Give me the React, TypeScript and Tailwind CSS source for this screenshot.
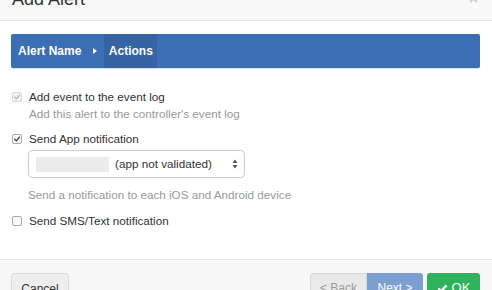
import React from 'react';

function Check({ checked, disabled }: { checked?: boolean; disabled?: boolean }) {
    return (
        <span
            className={`flex h-[10px] w-[10px] shrink-0 items-center justify-center rounded-[2px] border ${
                disabled ? 'border-[#d6d6d6] bg-[#f2f2f2]' : 'border-[#a9a9a9] bg-[#fbfbfb]'
            }`}
        >
            {checked && (
                <svg viewBox="0 0 10 10" className="h-[8px] w-[8px]">
                    <path
                        d="M2 5.2 L4.2 7.4 L8 2.6"
                        fill="none"
                        stroke={disabled ? '#b5b5b5' : '#333'}
                        strokeWidth="1.6"
                        strokeLinecap="round"
                        strokeLinejoin="round"
                    />
                </svg>
            )}
        </span>
    );
}

export default function App() {
    return (
        <div className="flex h-[290px] w-[492px] flex-col overflow-hidden bg-white font-['Liberation_Sans',Arial,sans-serif] text-[#333]">
            {/* header */}
            <div className="relative h-[21px] shrink-0 overflow-hidden border-b border-[#e5e5e5] bg-[#f9f9f9]">
                <div className="-mt-[11px] pl-[12px] text-[18px] leading-[20px] text-[#333]">Add Alert</div>
                <span className="absolute right-[14px] -top-[9px] text-[16px] font-bold leading-[16px] text-[#c8c8c8]">×</span>
            </div>

            {/* body */}
            <div className="flex flex-1 flex-col pl-[11px] pr-[12px] pt-[13px]">
                <div className="flex h-[34px] items-stretch rounded-[2px] bg-[#3a6eb5] text-[12px] font-bold text-white shadow-[0_1px_1px_rgba(0,0,0,0.15)]">
                    <div className="flex items-center pl-[7px] pr-[12px]">Alert Name</div>
                    <div className="flex items-center pr-[7px]">
                        <svg viewBox="0 0 4 6" className="h-[6px] w-[4px]">
                            <path d="M0 0 L4 3 L0 6 Z" fill="#fff" />
                        </svg>
                    </div>
                    <div className="flex w-[53px] items-center justify-center bg-[#3563a3]">Actions</div>
                </div>

                <div className="mt-[22px] flex flex-col text-[11.7px]">
                    <label className="flex h-[14px] items-center gap-[7px] pl-[1px]">
                        <Check checked disabled />
                        <span>Add event to the event log</span>
                    </label>
                    <div className="mt-[3px] pl-[18px] leading-[14px] text-[#999]">Add this alert to the controller's event log</div>

                    <label className="mt-[11px] flex h-[14px] items-center gap-[7px] pl-[1px]">
                        <Check checked />
                        <span>Send App notification</span>
                    </label>

                    <div className="ml-[17px] mt-[4px] flex h-[28px] w-[217px] items-center rounded-[4px] border border-[#cfcfcf] bg-white pl-[7px] pr-[6px]">
                        <span className="h-[15px] w-[73px] bg-[#ececec]" />
                        <span className="ml-[6px] flex-1">(app not validated)</span>
                        <svg viewBox="0 0 6 10" className="h-[10px] w-[6px]">
                            <path d="M3 0.5 L5.5 4 L0.5 4 Z M3 9.5 L5.5 6 L0.5 6 Z" fill="#555" />
                        </svg>
                    </div>

                    <div className="mt-[10px] pl-[17px] leading-[14px] text-[#999]">Send a notification to each iOS and Android device</div>

                    <label className="mt-[12px] flex h-[14px] items-center gap-[7px] pl-[1px]">
                        <Check />
                        <span>Send SMS/Text notification</span>
                    </label>
                </div>
            </div>

            {/* footer */}
            <div className="flex h-[31px] shrink-0 items-start justify-between border-t border-[#e5e5e5] bg-[#f7f7f7] pl-[11px] pr-[12px] pt-[13px] text-[12px]">
                <button className="h-[30px] w-[58px] rounded-[3px] border border-[#dcdcdc] bg-[#eeeeee] pt-[2px] text-[#333]">Cancel</button>
                <div className="flex items-start">
                    <button className="h-[30px] w-[57px] rounded-l-[3px] border border-[#d8d8d8] bg-[#e9e9e9] text-[#999]">&lt; Back</button>
                    <button className="h-[30px] w-[56px] rounded-r-[3px] bg-[#7c9fd1] text-white">Next &gt;</button>
                    <button className="ml-[4px] flex h-[30px] w-[53px] items-center justify-center gap-[4px] rounded-[3px] bg-[#2eb25b] text-[13px] text-white">
                        <svg viewBox="0 0 12 10" className="h-[9px] w-[11px]">
                            <path d="M1.5 5 L4.5 8 L10.5 1.5" fill="none" stroke="#fff" strokeWidth="2.6" />
                        </svg>
                        OK
                    </button>
                </div>
            </div>
        </div>
    );
}
